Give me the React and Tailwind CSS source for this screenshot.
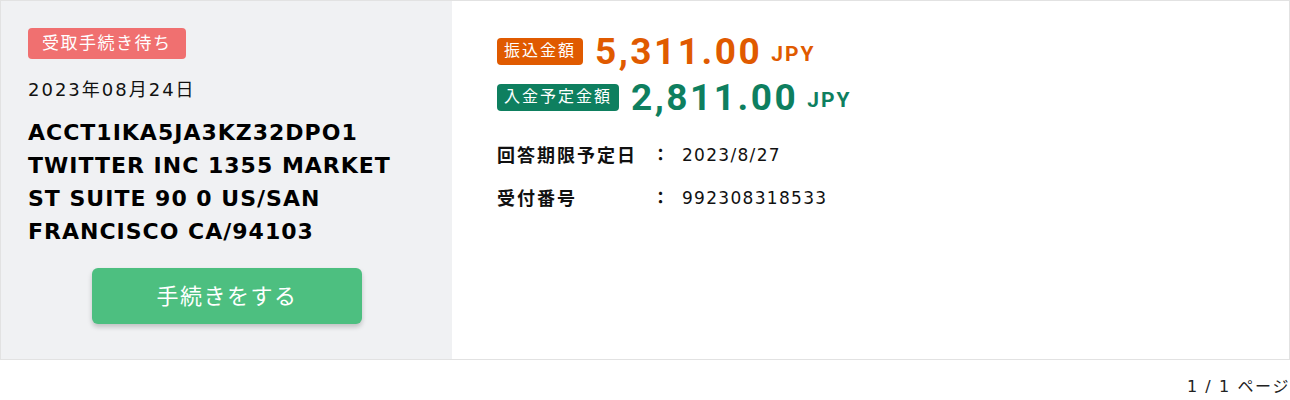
import React from 'react';

const jp = { fontFamily: '"DejaVu Sans", "Noto Sans CJK JP", sans-serif' };
const num = { fontFamily: 'Roboto, "Noto Sans CJK JP", sans-serif' };

function InfoRow({ label, value }) {
    return (
        <div className="flex items-center h-[43px] text-[17px] text-[#111]">
            <span className="w-[155px] font-bold text-[18px] tracking-[2px]">{label}</span>
            <span className="w-[30px] font-bold">：</span>
            <span className="tracking-[1.3px]">{value}</span>
        </div>
    );
}

function Amount({ label, badgeColor, textColor, value }) {
    return (
        <div className="flex items-center h-[46px]">
            <span className={`${badgeColor} text-white text-[16px] tracking-[2px] rounded px-[7px] h-[27px] flex items-center mr-[12px]`}>{label}</span>
            <span className={`${textColor} font-bold text-[37px] tracking-[2.5px] leading-none`} style={num}>{value}</span>
            <span className={`${textColor} font-bold text-[21px] tracking-[2px] ml-[9px] mt-[8px]`} style={num}>JPY</span>
        </div>
    );
}

export default function App() {
    return (
        <div className="w-[1290px] bg-white" style={jp}>
            <div className="flex border border-[#e2e2e2] h-[360px]">
                <div className="w-[451px] bg-[#f0f1f3] pl-[27px] pr-6 pt-[27px] flex flex-col">
                    <span className="self-start bg-[#f07070] text-white text-[17px] tracking-[1.5px] rounded h-[31px] px-[14px] flex items-center">受取手続き待ち</span>
                    <div className="mt-[17px] text-[18px] tracking-[2px] text-[#111]">2023年08月24日</div>
                    <div className="mt-[13px] text-[22px] font-bold leading-[33px] tracking-[1px] text-black">
                        ACCT1IKA5JA3KZ32DPO1 TWITTER INC 1355 MARKET ST SUITE 90 0 US/SAN FRANCISCO CA/94103
                    </div>
                    <button className="mt-[20px] w-[270px] h-[56px] bg-[#4dbf80] text-white text-[22px] tracking-[1.5px] rounded-md shadow-[0_3px_5px_rgba(0,0,0,0.2)] ml-[64px]">手続きをする</button>
                </div>
                <div className="flex-1 pl-[45px] pt-[27px]">
                    <Amount label="振込金額" badgeColor="bg-[#e05a00]" textColor="text-[#e05a00]" value="5,311.00" />
                    <Amount label="入金予定金額" badgeColor="bg-[#0e7f5f]" textColor="text-[#0e7f5f]" value="2,811.00" />
                    <div className="mt-[14px]">
                        <InfoRow label="回答期限予定日" value="2023/8/27" />
                        <InfoRow label="受付番号" value="992308318533" />
                    </div>
                </div>
            </div>
            <div className="flex justify-end pt-[15px] text-[16px] tracking-[1.6px] text-[#222]">1 / 1 ページ</div>
        </div>
    );
}
